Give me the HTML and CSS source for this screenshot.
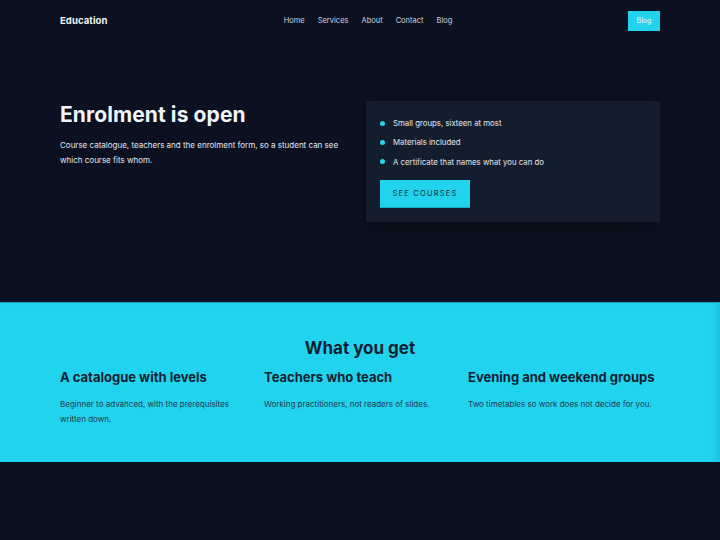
FILE: index.html
```html
<!DOCTYPE html>
<html lang="en">
<head>
<meta charset="utf-8">
<title>Education</title>
<link rel="stylesheet" href="styles.css">
</head>
<body>
<header class="topbar">
  <div class="wrap topbar-inner">
    <div class="brand">Education</div>
    <nav class="nav">
      <a href="#">Home</a>
      <a href="#">Services</a>
      <a href="#">About</a>
      <a href="#">Contact</a>
      <a href="#">Blog</a>
    </nav>
    <a class="nav-btn" href="#">Blog</a>
  </div>
</header>
<section class="hero">
  <div class="wrap hero-inner">
    <div class="hero-text">
      <h1>Enrolment is open</h1>
      <p>Course catalogue, teachers and the enrolment form, so a student can see which course fits whom.</p>
    </div>
    <div class="card">
      <ul class="points">
        <li>Small groups, sixteen at most</li>
        <li>Materials included</li>
        <li>A certificate that names what you can do</li>
      </ul>
      <a class="cta" href="#">SEE COURSES</a>
    </div>
  </div>
</section>
<section class="features">
  <div class="wrap">
    <h2>What you get</h2>
    <div class="cols">
      <div class="col">
        <h3>A catalogue with levels</h3>
        <p>Beginner to advanced, with the prerequisites written down.</p>
      </div>
      <div class="col">
        <h3>Teachers who teach</h3>
        <p>Working practitioners, not readers of slides.</p>
      </div>
      <div class="col">
        <h3>Evening and weekend groups</h3>
        <p>Two timetables so work does not decide for you.</p>
      </div>
    </div>
  </div>
</section>
</body>
</html>
```
FILE: styles.css
```css
* { box-sizing: border-box; }
html, body { margin: 0; padding: 0; }
body {
  background: #0b1120;
  color: #e2e8f0;
  font-family: Inter, "Open Sans", "Liberation Sans", sans-serif;
  width: 720px;
  min-height: 540px;
}
a { text-decoration: none; color: inherit; }
.wrap { width: 600px; margin: 0 auto; }

.topbar { height: 41px; }
.topbar-inner {
  display: flex;
  align-items: center;
  justify-content: space-between;
  height: 41px;
}
.brand { font-weight: 700; font-size: 9.5px; color: #f1f5f9; width: 120px; letter-spacing: 0.1px; }
.nav { display: flex; gap: 13px; font-size: 7.5px; color: #cbd5e1; margin-left: 48px; }
.nav-btn {
  width: 32px; height: 20px;
  display: flex; align-items: center; justify-content: center;
  background: #22d3ee; color: #f1f5f9; font-size: 7px;
  margin-left: 120px;
}

.hero { height: 261px; padding-top: 60px; }
.hero-inner { display: flex; justify-content: space-between; }
.hero-text { width: 294px; padding-top: 1px; }
.hero h1 { margin: 0; font-size: 21px; font-weight: 700; color: #f1f5f9; line-height: 25px; letter-spacing: 0.1px; }
.hero p { margin: 11px 0 0; font-size: 8px; line-height: 14.5px; color: #e2e8f0; }

.card {
  width: 294px;
  background: #141d2d;
  padding: 17px 14px 14px;
  box-shadow: 0 4px 14px rgba(0,0,0,0.35);
  height: 121px;
}
.points { list-style: none; margin: 0; padding: 0; }
.points li {
  position: relative;
  padding-left: 13px;
  font-size: 7.8px;
  line-height: 10px;
  margin-bottom: 9.3px;
  color: #e2e8f0;
}
.points li::before {
  content: "";
  position: absolute;
  left: 0; top: 2.5px;
  width: 5px; height: 5px;
  border-radius: 50%;
  background: #22d3ee;
}
.cta {
  display: inline-flex; align-items: center; justify-content: center;
  width: 90px; height: 27px;
  margin-top: 4px;
  background: #22d3ee;
  color: #0f2a3a;
  font-size: 7.5px;
  letter-spacing: 1.2px;
  box-shadow: 0 1px 0 #1aa9c0;
}

.features {
  background: #22d3ee;
  height: 160px;
  padding-top: 35px;
  border-top: 1px solid #1a9fb6;
  box-shadow: inset -8px 0 8px -6px rgba(0,0,0,0.12);
}
.features h2 {
  margin: 0; text-align: center;
  font-size: 17px; font-weight: 700; color: #0f1f33; line-height: 21px;
}
.cols { display: grid; grid-template-columns: repeat(3, 1fr); gap: 12px; margin-top: 10px; }
.col h3 { margin: 0; font-size: 13px; font-weight: 700; color: #0f1f33; line-height: 16px; }
.col p { margin: 12px 0 0; font-size: 8px; line-height: 15px; color: #1e3a4c; }
```
